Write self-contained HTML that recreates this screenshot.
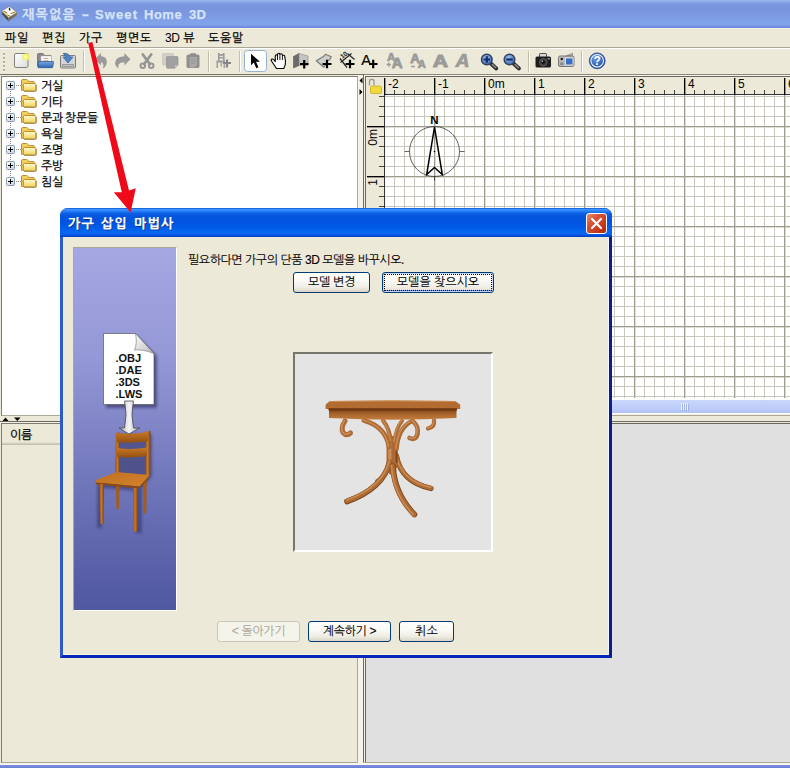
<!DOCTYPE html>
<html lang="ko">
<head>
<meta charset="utf-8">
<title>Sweet Home 3D</title>
<style>
html,body{margin:0;padding:0;}
body{-webkit-text-stroke:0.25px currentColor;width:790px;height:768px;overflow:hidden;position:relative;background:#ece9d8;font-family:"Liberation Sans","NanumGothic",sans-serif;font-size:12px;color:#000;}
.abs{position:absolute;}
div,span{box-sizing:border-box;}
svg{position:absolute;overflow:visible;}
#titlebar{left:0;top:0;width:790px;height:28px;background:linear-gradient(#a0baf1 0,#8ba6e8 2px,#7b97e1 4px,#7995de 10px,#7c9ae2 16px,#80a3e8 22px,#7fa2e8 25px,#7089e0 27px,#6f86e0 28px);}
#title{left:22px;top:7px;font-size:13px;font-weight:bold;color:#d6e2f8;white-space:nowrap;}
#menubar{left:0;top:28px;width:790px;height:20px;background:#ece9d8;border-top:1px solid #f6f3e0;border-bottom:1px solid #aca899;}
.mi{position:absolute;top:2px;font-size:12px;white-space:nowrap;letter-spacing:0.7px;}
#toolbar{left:0;top:48px;width:790px;height:26px;background:#ece9d8;border-top:1px solid #fff;}
#tree{left:1px;top:76px;width:357px;height:340px;background:#fff;border:1px solid #7f7d70;border-right-color:#aca899;border-bottom-color:#aca899;}
.tn{position:absolute;left:39px;font-size:12px;line-height:14px;white-space:nowrap;letter-spacing:-0.3px;word-spacing:-1px;}
#furn{left:1px;top:423px;width:357px;height:340px;background:#ece9d8;border:1px solid #7f7d70;border-right-color:#aca899;border-bottom-color:#aca899;}
#furnhead{left:0;top:0;width:355px;height:21px;border-bottom:1px solid #c5c1b0;box-shadow:inset 0 -1px 0 #d3cfbe,inset 0 -2px 0 #e2dfcf;font-size:12px;letter-spacing:-0.3px;}
#plan{left:366px;top:77px;width:424px;height:323px;background:#fff;overflow:hidden;}
#view3d{left:366px;top:424px;width:424px;height:338px;background:#e0e0e0;}
#dialog{left:60px;top:208px;width:552px;height:450px;background:#ece9d8;border:3px solid #0a1e8c;border-left-color:#2a5cc4;border-bottom-color:#0828bc;border-top:0;border-radius:8px 8px 0 0;box-shadow:inset 1px 0 0 #dcecfc,inset -1px 0 0 #f6faff,inset 0 -1px 0 #fbf5dc;}
#dtitle{left:-3px;top:0;width:552px;height:29px;border-radius:8px 8px 0 0;background:linear-gradient(#0a52dc 0,#3c92ff 1.5px,#2a82fa 3px,#0e62e8 5px,#0556dd 8px,#0054e0 14px,#025ce8 20px,#0468f2 24px,#0462ee 26px,#0248d0 28px,#0140c4 29px);}
#dtext{left:8px;top:8px;color:#fff;font-weight:bold;font-size:13px;letter-spacing:1.3px;word-spacing:1px;white-space:nowrap;text-shadow:1px 1px 0 #0a2a80;}
#msg,.btn{-webkit-text-stroke:0.1px currentColor;}
.btn{position:absolute;height:21px;border:1px solid #003c74;border-radius:3px;background:linear-gradient(#fff 0,#fbfaf6 40%,#efede4 75%,#d9d4c6 100%);font-size:12px;letter-spacing:-0.3px;text-align:center;line-height:19px;white-space:nowrap;}
.btn.dis{border-color:#c9c7ba;color:#aca899;background:#f5f4ea;}
</style>
</head>
<body>
<!-- title bar -->
<div id="titlebar" class="abs"><div id="title" class="abs"><span class="abs" style="left:0;letter-spacing:1.3px">재목없음</span><span class="abs" style="left:60px;transform:scaleX(1.6);transform-origin:0 0">-</span><span class="abs" style="left:73px;letter-spacing:1.1px">Sweet</span><span class="abs" style="left:122px;letter-spacing:0.5px">Home</span><span class="abs" style="left:167px;letter-spacing:0.3px">3D</span></div></div>
<!-- menu -->
<div id="menubar" class="abs">
<span class="mi" style="left:5px">파일</span><span class="mi" style="left:42px">편집</span><span class="mi" style="left:79px">가구</span><span class="mi" style="left:116px">평면도</span><span class="mi" style="left:165px;word-spacing:-0.5px"><span style="letter-spacing:-0.3px;-webkit-text-stroke:0">3D</span> 뷰</span><span class="mi" style="left:208px">도움말</span>
</div>
<div id="toolbar" class="abs"></div>
<svg class="abs" style="left:0;top:48px" width="790" height="27" viewBox="0 48 790 27">
<defs><linearGradient id="gnew" x1="0" y1="0" x2="1" y2="1"><stop offset="0" stop-color="#fff"/><stop offset="1" stop-color="#dcdcdc"/></linearGradient><linearGradient id="gblue" x1="0" y1="0" x2="0" y2="1"><stop offset="0" stop-color="#7aa6de"/><stop offset="1" stop-color="#2f62b0"/></linearGradient><radialGradient id="ghelp" cx="0.400" cy="0.300" r="0.800"><stop offset="0" stop-color="#6f9ee6"/><stop offset="1" stop-color="#173f94"/></radialGradient><radialGradient id="glens" cx="0.400" cy="0.350" r="0.700"><stop offset="0" stop-color="#a4c4ee"/><stop offset="1" stop-color="#3566b6"/></radialGradient></defs>
<rect x="0" y="74" width="363" height="1" fill="#77756a"/>
<rect x="3" y="53" width="2" height="2" fill="#b5b2a0"/><rect x="4" y="55" width="1" height="1" fill="#fff"/>
<rect x="3" y="57" width="2" height="2" fill="#b5b2a0"/><rect x="4" y="59" width="1" height="1" fill="#fff"/>
<rect x="3" y="61" width="2" height="2" fill="#b5b2a0"/><rect x="4" y="63" width="1" height="1" fill="#fff"/>
<rect x="3" y="65" width="2" height="2" fill="#b5b2a0"/><rect x="4" y="67" width="1" height="1" fill="#fff"/>
<rect x="3" y="69" width="2" height="2" fill="#b5b2a0"/><rect x="4" y="71" width="1" height="1" fill="#fff"/>
<rect x="14.500" y="53.500" width="13.500" height="14" rx="1.500" fill="url(#gnew)" stroke="#808080"/>
<circle cx="25.800" cy="57" r="3.600" fill="#f4f060" opacity="0.950"/><circle cx="25.800" cy="57" r="1.800" fill="#fcfcb0"/>
<path d="M37.500 54.500q0-1 1-1h4.500l1.500 2h6q1 0 1 1v9.500h-14z" fill="#8a8a8a" stroke="#6a6a6a" stroke-width="0.800"/>
<rect x="41" y="56" width="10.500" height="7" fill="#f8f8f8" stroke="#bbb" stroke-width="0.500"/><rect x="43.500" y="58" width="5" height="0.800" fill="#d08878"/><rect x="43.500" y="60" width="5" height="0.800" fill="#d0a898"/>
<path d="M38.500 61.500h14.500q0.600 0 0.500 0.600l-0.800 5q-0.100 0.600-0.700 0.600h-13.500q-0.600 0-0.600-0.600z" fill="url(#gblue)" stroke="#2a58a0" stroke-width="0.800"/>
<rect x="60.500" y="55.500" width="15" height="12.500" rx="1" fill="#d4d4d4" stroke="#7c7c7c"/>
<rect x="62" y="64" width="12" height="3" fill="#9a9a9a"/><rect x="63" y="65" width="10" height="1" fill="#c4c4c4"/>
<path d="M63 53.500q5.500-1 7 3.500h3l-5 6l-5-6h3q-0.500-2.500-3-3.500z" fill="#4a86c8" stroke="#2a5a98" stroke-width="0.700" stroke-linejoin="round"/>
<rect x="83" y="51" width="1" height="21" fill="#c2bfae"/><rect x="84" y="51" width="1" height="21" fill="#fff"/>
<rect x="208" y="51" width="1" height="21" fill="#c2bfae"/><rect x="209" y="51" width="1" height="21" fill="#fff"/>
<rect x="239" y="51" width="1" height="21" fill="#c2bfae"/><rect x="240" y="51" width="1" height="21" fill="#fff"/>
<rect x="528" y="51" width="1" height="21" fill="#c2bfae"/><rect x="529" y="51" width="1" height="21" fill="#fff"/>
<rect x="581" y="51" width="1" height="21" fill="#c2bfae"/><rect x="582" y="51" width="1" height="21" fill="#fff"/>
<path d="M94.800 59.200L101 53v3.300Q107.200 56.800 106.800 62.500Q106.400 66.500 102.800 68.600Q104 66.300 103.200 64.300Q102.600 62.400 101 62.300V65.500Z" fill="#9a9a9a"/>
<path d="M130.500 59.200L124.300 53v3.300Q115 56.800 115 63.500Q115.300 66.800 118.500 68.600Q117.800 66.300 118.800 64.300Q120.200 62.400 124.300 62.300V65.500Z" fill="#9a9a9a"/>
<g stroke="#969696" fill="none" stroke-width="2.800" stroke-linecap="round"><path d="M142.800 54.500l7 9.500M151.200 54.500l-7 9.500"/></g><g stroke="#969696" fill="none" stroke-width="2"><ellipse cx="142.800" cy="65.800" rx="2.300" ry="2.200"/><ellipse cx="151.200" cy="65.800" rx="2.300" ry="2.200"/></g>
<rect x="162.500" y="53.500" width="11" height="11.500" rx="1" fill="#cfcfc8" stroke="#c0c0b8" stroke-width="0.600"/>
<path d="M166.500 57.500q0-1 1-1h9.500q1 0 1 1v7.500l-3 3.200h-7.500q-1 0-1-1z" fill="#a0a0a0" stroke="#939393" stroke-width="0.700"/><path d="M175 68v-3h3z" fill="#c4c4c4"/>
<rect x="186.500" y="54.500" width="13" height="13.500" rx="1.800" fill="#8e8e8e"/><rect x="190" y="53.300" width="6" height="2.500" rx="1" fill="#8e8e8e"/>
<path d="M189.500 57h7.500v8l-2.500 2.500h-5z" fill="#a8a8a8"/><path d="M191 59.500h4.500M191 61.500h4.500M191 63.500h3" stroke="#8e8e8e" stroke-width="0.700"/>
<g fill="#9c9c9c"><rect x="218" y="53" width="1.600" height="8.500"/><rect x="223" y="53" width="1.600" height="8.500"/><rect x="218" y="54" width="6" height="1.800"/><rect x="218" y="57" width="6" height="1.500"/><path d="M216.500 60.500h8.500v2h-8.500z"/><rect x="216.500" y="62" width="1.500" height="6"/><rect x="220.500" y="62" width="1.300" height="4.500"/><rect x="223.500" y="62" width="1.500" height="6"/></g>
<path d="M223 63h8M227 59.500v8" stroke="#868686" stroke-width="2.200"/>
<rect x="244.500" y="50.500" width="22" height="21" rx="3" fill="#fff" stroke="#98b0d0"/>
<path d="M251 53.800v11.400l2.800-2.600l2.500 5.600l2.200-1l-2.500-5.400h4z" fill="#000"/>
<path d="M276.500 68.500L272.500 62.500Q270.500 60 271.500 59.200Q272.800 58.500 274.200 60.200L275.300 61.500V56.200Q275.300 54.800 276.400 54.800Q277.500 54.800 277.500 56.200V54.700Q277.500 53.300 278.700 53.300Q279.900 53.300 279.900 54.700V55Q280 53.800 281.200 53.800Q282.400 53.800 282.400 55.200V56.300Q282.500 55.300 283.600 55.300Q284.800 55.300 284.800 56.800L285.500 61.500Q285.800 65 283.800 68.500Z" fill="#fff" stroke="#000" stroke-width="1.100" stroke-linejoin="round"/><path d="M277.500 56v4M279.900 55.500v4.500M282.400 56.500v3.500" stroke="#000" stroke-width="0.900"/>
<path d="M293.500 56.500l5.500-3v12l-5.500 2.500z" fill="#6c6c6c" stroke="#555" stroke-width="0.600"/><path d="M299 53.500l9 2.500v9.500h-9z" fill="#c4c4c4" stroke="#8a8a8a" stroke-width="0.600"/>
<path d="M300 64h8.500M304.200 60v8.500" stroke="#000" stroke-width="2.200"/>
<path d="M316.300 60.800L323 56.800L325.500 54.300L331.300 56.800L329.800 59.800L328 60.500L323.800 67.200Z" fill="#cdcdcd" stroke="#7c7c7c" stroke-width="1.200" stroke-linejoin="round"/>
<path d="M322.500 64h9M327 59.800v8.500" stroke="#000" stroke-width="2.200"/>
<g stroke="#2a2a2a" stroke-width="1.300" fill="none"><path d="M340.500 62.500l11-9M347.500 53.500l7 6M340 58.500l7 9"/></g>
<text transform="translate(342.500,59) rotate(-40)" font-family="Liberation Sans, sans-serif" font-size="6.500" font-weight="bold" fill="#222">10</text>
<path d="M345.500 64h9M350 59.800v8.500" stroke="#000" stroke-width="2.200"/>
<text x="361.300" y="65" font-family="Liberation Sans, sans-serif" font-size="14.800" fill="#000" stroke="#000" stroke-width="0.150">A</text>
<path d="M369 64h8.500M373.200 59.800v8.500" stroke="#000" stroke-width="2.200"/>
<g font-family="Liberation Sans, sans-serif" font-weight="bold" fill="#9a9a9a" stroke="#9a9a9a" stroke-linejoin="round"><text x="387" y="61.300" font-size="11.600" stroke-width="0.700">A</text><text x="391.800" y="68.300" font-size="15" stroke-width="0.900">A</text><text x="410.200" y="62.500" font-size="13.300" stroke-width="0.900">A</text><text x="417.800" y="68" font-size="11.200" stroke-width="0.700">A</text><text transform="translate(432.800,66.700) scale(1.220,1)" font-size="17.300" stroke-width="1.100">A</text><text transform="translate(455.500,66.800) scale(1.100,1)" font-size="17.600" font-style="italic" stroke-width="0.700">A</text></g>
<path d="M386.500 64.500h4.500M388.700 62.500v4.200M411 66.500h4" stroke="#9c9c9c" stroke-width="1.400"/>
<path d="M490.8 63.500l5.500 5" stroke="#2e2e2e" stroke-width="3.800" stroke-linecap="round"/><path d="M492.3 64.500l3.500 3.200" stroke="#9a9a9a" stroke-width="1.200" stroke-linecap="round"/>
<circle cx="486.8" cy="59.500" r="5.300" fill="url(#glens)" stroke="#33425e" stroke-width="1.500"/>
<path d="M483.6 59.500h6.400M486.8 56.300v6.400" stroke="#142c6c" stroke-width="2.200"/>
<path d="M513.5 63.500l5.500 5" stroke="#2e2e2e" stroke-width="3.800" stroke-linecap="round"/><path d="M515.0 64.500l3.500 3.200" stroke="#9a9a9a" stroke-width="1.200" stroke-linecap="round"/>
<circle cx="509.5" cy="59.500" r="5.300" fill="url(#glens)" stroke="#33425e" stroke-width="1.500"/>
<path d="M506.3 59.500h6.400" stroke="#142c6c" stroke-width="2.200"/>
<rect x="539.500" y="53.500" width="7" height="4" rx="0.800" fill="#d8d8d8" stroke="#222" stroke-width="0.800"/><rect x="535.500" y="56.500" width="15.500" height="11" rx="1.500" fill="#1e1e1e"/>
<circle cx="543.300" cy="62.300" r="3.800" fill="#3a3a3a" stroke="#6a6a6a" stroke-width="0.800"/><circle cx="543.300" cy="62.300" r="1.800" fill="#111"/><circle cx="542.300" cy="61.300" r="0.700" fill="#ccc"/><rect x="547.500" y="58" width="2.500" height="1.500" fill="#888"/>
<path d="M566 56l6.500-2.800v3z" fill="#b0b0b0" stroke="#808080" stroke-width="0.600"/><rect x="558.500" y="56" width="15.500" height="10.500" rx="1.500" fill="#b8b8b8" stroke="#6e6e6e" stroke-width="0.900"/>
<rect x="565.500" y="58" width="7.500" height="7" fill="#3a6cc4" stroke="#e8e8e8" stroke-width="0.900"/><circle cx="561.800" cy="59" r="1.800" fill="#222" stroke="#eee" stroke-width="0.600"/><rect x="560" y="62.500" width="3.500" height="2.500" fill="#8c8c8c"/>
<circle cx="597.200" cy="60.800" r="7.900" fill="url(#ghelp)" stroke="#1c3f8c" stroke-width="0.800"/><circle cx="597.200" cy="60.800" r="6.300" fill="none" stroke="#e8eefc" stroke-width="1.100"/>
<text x="597.200" y="65.200" text-anchor="middle" font-family="Liberation Sans, sans-serif" font-weight="bold" font-size="12" fill="#fff">?</text>
</svg>
<!-- tree -->
<div id="tree" class="abs">
<span class="tn" style="top:2px">거실</span>
<span class="tn" style="top:18px">기타</span>
<span class="tn" style="top:34px">문과 창문들</span>
<span class="tn" style="top:50px">욕실</span>
<span class="tn" style="top:66px">조명</span>
<span class="tn" style="top:82px">주방</span>
<span class="tn" style="top:98px">침실</span>
</div>
<svg class="abs" style="left:0;top:0" width="364" height="450" viewBox="0 0 364 450">
<defs><linearGradient id="gfold" x1="0" y1="0" x2="0" y2="1"><stop offset="0" stop-color="#fffbd0"/><stop offset="1" stop-color="#f2d25c"/></linearGradient><linearGradient id="gbox" x1="0" y1="0" x2="1" y2="1"><stop offset="0" stop-color="#fff"/><stop offset="1" stop-color="#d4d0c4"/></linearGradient></defs>
<g><path d="M1.500 11L8.500 17.500V21.500L2.300 14.500Z" fill="#4e4a40"/><path d="M8.500 17.500L17 12.500L16.600 15.300L8.500 21.500Z" fill="#7c6e50"/><path d="M1.500 11L9.500 6.300L17 12.500L8.500 17.700Z" fill="#fbfaf6" stroke="#5a5a60" stroke-width="0.500"/><path d="M9.300 7.200q1.300 1.300 1.200 3.600l-1.600-0.800q-0.300-1.600 0.400-2.800z" fill="#111"/><path d="M3.800 11.300l3 1.700M6.300 14.800l3.300 1.200M11 13.500l4-1.200" stroke="#a87a20" stroke-width="1.100" stroke-linecap="round"/><path d="M5 13.300l3 2" stroke="#e8d8a0" stroke-width="1"/></g>
<path d="M10.500 91v86" stroke="#8c8c8c" stroke-width="1" stroke-dasharray="1 1" shape-rendering="crispEdges"/>
<g transform="translate(0,76)"><path d="M16 9.500h5" stroke="#8c8c8c" stroke-width="1" stroke-dasharray="1 1" shape-rendering="crispEdges"/><rect x="6.500" y="5.500" width="8" height="8" rx="1" fill="url(#gbox)" stroke="#8498b8"/><rect x="8" y="9" width="5" height="1" fill="#000"/><rect x="10" y="7" width="1" height="5" fill="#000"/><path d="M21.500 14V5Q21.500 3.500 23 3.500H26.500Q27.500 3.500 28 4.500L28.500 5.500H33Q34.500 5.500 34.500 7V8.500H23.500V14.500H22Q21.500 14.500 21.500 14Z" fill="#f2cf60" stroke="#b48626" stroke-width="0.900"/><path d="M23.300 8.500q0-1 1-1h10.500q1 0 1 1v5.300q0 1-1 1h-10.500q-1 0-1-1z" fill="url(#gfold)" stroke="#b48626" stroke-width="0.900"/><path d="M24 15.500h11.300q1.200-0.300 1.200-1.500v-5" fill="none" stroke="#8a6414" stroke-width="0.800" opacity="0.750"/></g>
<g transform="translate(0,92)"><path d="M16 9.500h5" stroke="#8c8c8c" stroke-width="1" stroke-dasharray="1 1" shape-rendering="crispEdges"/><rect x="6.500" y="5.500" width="8" height="8" rx="1" fill="url(#gbox)" stroke="#8498b8"/><rect x="8" y="9" width="5" height="1" fill="#000"/><rect x="10" y="7" width="1" height="5" fill="#000"/><path d="M21.500 14V5Q21.500 3.500 23 3.500H26.500Q27.500 3.500 28 4.500L28.500 5.500H33Q34.500 5.500 34.500 7V8.500H23.500V14.500H22Q21.500 14.500 21.500 14Z" fill="#f2cf60" stroke="#b48626" stroke-width="0.900"/><path d="M23.300 8.500q0-1 1-1h10.500q1 0 1 1v5.300q0 1-1 1h-10.500q-1 0-1-1z" fill="url(#gfold)" stroke="#b48626" stroke-width="0.900"/><path d="M24 15.500h11.300q1.200-0.300 1.200-1.500v-5" fill="none" stroke="#8a6414" stroke-width="0.800" opacity="0.750"/></g>
<g transform="translate(0,108)"><path d="M16 9.500h5" stroke="#8c8c8c" stroke-width="1" stroke-dasharray="1 1" shape-rendering="crispEdges"/><rect x="6.500" y="5.500" width="8" height="8" rx="1" fill="url(#gbox)" stroke="#8498b8"/><rect x="8" y="9" width="5" height="1" fill="#000"/><rect x="10" y="7" width="1" height="5" fill="#000"/><path d="M21.500 14V5Q21.500 3.500 23 3.500H26.500Q27.500 3.500 28 4.500L28.500 5.500H33Q34.500 5.500 34.500 7V8.500H23.500V14.500H22Q21.500 14.500 21.500 14Z" fill="#f2cf60" stroke="#b48626" stroke-width="0.900"/><path d="M23.300 8.500q0-1 1-1h10.500q1 0 1 1v5.300q0 1-1 1h-10.500q-1 0-1-1z" fill="url(#gfold)" stroke="#b48626" stroke-width="0.900"/><path d="M24 15.500h11.300q1.200-0.300 1.200-1.500v-5" fill="none" stroke="#8a6414" stroke-width="0.800" opacity="0.750"/></g>
<g transform="translate(0,124)"><path d="M16 9.500h5" stroke="#8c8c8c" stroke-width="1" stroke-dasharray="1 1" shape-rendering="crispEdges"/><rect x="6.500" y="5.500" width="8" height="8" rx="1" fill="url(#gbox)" stroke="#8498b8"/><rect x="8" y="9" width="5" height="1" fill="#000"/><rect x="10" y="7" width="1" height="5" fill="#000"/><path d="M21.500 14V5Q21.500 3.500 23 3.500H26.500Q27.500 3.500 28 4.500L28.500 5.500H33Q34.500 5.500 34.500 7V8.500H23.500V14.500H22Q21.500 14.500 21.500 14Z" fill="#f2cf60" stroke="#b48626" stroke-width="0.900"/><path d="M23.300 8.500q0-1 1-1h10.500q1 0 1 1v5.300q0 1-1 1h-10.500q-1 0-1-1z" fill="url(#gfold)" stroke="#b48626" stroke-width="0.900"/><path d="M24 15.500h11.300q1.200-0.300 1.200-1.500v-5" fill="none" stroke="#8a6414" stroke-width="0.800" opacity="0.750"/></g>
<g transform="translate(0,140)"><path d="M16 9.500h5" stroke="#8c8c8c" stroke-width="1" stroke-dasharray="1 1" shape-rendering="crispEdges"/><rect x="6.500" y="5.500" width="8" height="8" rx="1" fill="url(#gbox)" stroke="#8498b8"/><rect x="8" y="9" width="5" height="1" fill="#000"/><rect x="10" y="7" width="1" height="5" fill="#000"/><path d="M21.500 14V5Q21.500 3.500 23 3.500H26.500Q27.500 3.500 28 4.500L28.500 5.500H33Q34.500 5.500 34.500 7V8.500H23.500V14.500H22Q21.500 14.500 21.500 14Z" fill="#f2cf60" stroke="#b48626" stroke-width="0.900"/><path d="M23.300 8.500q0-1 1-1h10.500q1 0 1 1v5.300q0 1-1 1h-10.500q-1 0-1-1z" fill="url(#gfold)" stroke="#b48626" stroke-width="0.900"/><path d="M24 15.500h11.300q1.200-0.300 1.200-1.500v-5" fill="none" stroke="#8a6414" stroke-width="0.800" opacity="0.750"/></g>
<g transform="translate(0,156)"><path d="M16 9.500h5" stroke="#8c8c8c" stroke-width="1" stroke-dasharray="1 1" shape-rendering="crispEdges"/><rect x="6.500" y="5.500" width="8" height="8" rx="1" fill="url(#gbox)" stroke="#8498b8"/><rect x="8" y="9" width="5" height="1" fill="#000"/><rect x="10" y="7" width="1" height="5" fill="#000"/><path d="M21.500 14V5Q21.500 3.500 23 3.500H26.500Q27.500 3.500 28 4.500L28.500 5.500H33Q34.500 5.500 34.500 7V8.500H23.500V14.500H22Q21.500 14.500 21.500 14Z" fill="#f2cf60" stroke="#b48626" stroke-width="0.900"/><path d="M23.300 8.500q0-1 1-1h10.500q1 0 1 1v5.300q0 1-1 1h-10.500q-1 0-1-1z" fill="url(#gfold)" stroke="#b48626" stroke-width="0.900"/><path d="M24 15.500h11.300q1.200-0.300 1.200-1.500v-5" fill="none" stroke="#8a6414" stroke-width="0.800" opacity="0.750"/></g>
<g transform="translate(0,172)"><path d="M16 9.500h5" stroke="#8c8c8c" stroke-width="1" stroke-dasharray="1 1" shape-rendering="crispEdges"/><rect x="6.500" y="5.500" width="8" height="8" rx="1" fill="url(#gbox)" stroke="#8498b8"/><rect x="8" y="9" width="5" height="1" fill="#000"/><rect x="10" y="7" width="1" height="5" fill="#000"/><path d="M21.500 14V5Q21.500 3.500 23 3.500H26.500Q27.500 3.500 28 4.500L28.500 5.500H33Q34.500 5.500 34.500 7V8.500H23.500V14.500H22Q21.500 14.500 21.500 14Z" fill="#f2cf60" stroke="#b48626" stroke-width="0.900"/><path d="M23.300 8.500q0-1 1-1h10.500q1 0 1 1v5.300q0 1-1 1h-10.500q-1 0-1-1z" fill="url(#gfold)" stroke="#b48626" stroke-width="0.900"/><path d="M24 15.500h11.300q1.200-0.300 1.200-1.500v-5" fill="none" stroke="#8a6414" stroke-width="0.800" opacity="0.750"/></g>
<rect x="0" y="421" width="358" height="1" fill="#6a685c"/><rect x="0" y="422" width="358" height="1" fill="#f4f2e8"/><path d="M2.500 421l3-3.500l3 3.500zM14 417.500h6.500l-3.200 3.500z" fill="#000"/>
</svg>
<div class="abs" style="left:358px;top:75px;width:5px;height:688px;background:#f5f3e8"></div>
<!-- furniture table -->
<div id="furn" class="abs"><div id="furnhead" class="abs"><span class="abs" style="left:8px;top:4px">이름</span></div></div>
<!-- plan -->
<div id="plan" class="abs"></div>
<svg class="abs" style="left:358px;top:74px" width="432" height="352" viewBox="358 74 432 352">
<rect x="363" y="74" width="427" height="1" fill="#8a887a"/>
<rect x="363" y="75" width="427" height="1" fill="#f4f2e8"/>
<rect x="363" y="76" width="427" height="1" fill="#6a685c"/>
<rect x="363" y="74" width="1" height="350" fill="#6a685c"/>
<rect x="364" y="75" width="1" height="349" fill="#f4f2e8"/>
<rect x="365" y="76" width="1" height="348" fill="#6a685c"/>
<rect x="366" y="77" width="424" height="18" fill="#ece9d8"/>
<rect x="366" y="77" width="18" height="321" fill="#ece9d8"/>
<g shape-rendering="crispEdges">
<rect x="394" y="95" width="1" height="303" fill="#c9c7bc"/>
<rect x="404" y="95" width="1" height="303" fill="#c9c7bc"/>
<rect x="414" y="95" width="1" height="303" fill="#c9c7bc"/>
<rect x="424" y="95" width="1" height="303" fill="#c9c7bc"/>
<rect x="444" y="95" width="1" height="303" fill="#c9c7bc"/>
<rect x="454" y="95" width="1" height="303" fill="#c9c7bc"/>
<rect x="464" y="95" width="1" height="303" fill="#c9c7bc"/>
<rect x="474" y="95" width="1" height="303" fill="#c9c7bc"/>
<rect x="494" y="95" width="1" height="303" fill="#c9c7bc"/>
<rect x="504" y="95" width="1" height="303" fill="#c9c7bc"/>
<rect x="514" y="95" width="1" height="303" fill="#c9c7bc"/>
<rect x="524" y="95" width="1" height="303" fill="#c9c7bc"/>
<rect x="544" y="95" width="1" height="303" fill="#c9c7bc"/>
<rect x="554" y="95" width="1" height="303" fill="#c9c7bc"/>
<rect x="564" y="95" width="1" height="303" fill="#c9c7bc"/>
<rect x="574" y="95" width="1" height="303" fill="#c9c7bc"/>
<rect x="594" y="95" width="1" height="303" fill="#c9c7bc"/>
<rect x="604" y="95" width="1" height="303" fill="#c9c7bc"/>
<rect x="614" y="95" width="1" height="303" fill="#c9c7bc"/>
<rect x="624" y="95" width="1" height="303" fill="#c9c7bc"/>
<rect x="644" y="95" width="1" height="303" fill="#c9c7bc"/>
<rect x="654" y="95" width="1" height="303" fill="#c9c7bc"/>
<rect x="664" y="95" width="1" height="303" fill="#c9c7bc"/>
<rect x="674" y="95" width="1" height="303" fill="#c9c7bc"/>
<rect x="694" y="95" width="1" height="303" fill="#c9c7bc"/>
<rect x="704" y="95" width="1" height="303" fill="#c9c7bc"/>
<rect x="714" y="95" width="1" height="303" fill="#c9c7bc"/>
<rect x="724" y="95" width="1" height="303" fill="#c9c7bc"/>
<rect x="744" y="95" width="1" height="303" fill="#c9c7bc"/>
<rect x="754" y="95" width="1" height="303" fill="#c9c7bc"/>
<rect x="764" y="95" width="1" height="303" fill="#c9c7bc"/>
<rect x="774" y="95" width="1" height="303" fill="#c9c7bc"/>
<rect x="385" y="96" width="405" height="1" fill="#c9c7bc"/>
<rect x="385" y="106" width="405" height="1" fill="#c9c7bc"/>
<rect x="385" y="116" width="405" height="1" fill="#c9c7bc"/>
<rect x="385" y="136" width="405" height="1" fill="#c9c7bc"/>
<rect x="385" y="146" width="405" height="1" fill="#c9c7bc"/>
<rect x="385" y="156" width="405" height="1" fill="#c9c7bc"/>
<rect x="385" y="166" width="405" height="1" fill="#c9c7bc"/>
<rect x="385" y="186" width="405" height="1" fill="#c9c7bc"/>
<rect x="385" y="196" width="405" height="1" fill="#c9c7bc"/>
<rect x="385" y="206" width="405" height="1" fill="#c9c7bc"/>
<rect x="385" y="216" width="405" height="1" fill="#c9c7bc"/>
<rect x="385" y="236" width="405" height="1" fill="#c9c7bc"/>
<rect x="385" y="246" width="405" height="1" fill="#c9c7bc"/>
<rect x="385" y="256" width="405" height="1" fill="#c9c7bc"/>
<rect x="385" y="266" width="405" height="1" fill="#c9c7bc"/>
<rect x="385" y="286" width="405" height="1" fill="#c9c7bc"/>
<rect x="385" y="296" width="405" height="1" fill="#c9c7bc"/>
<rect x="385" y="306" width="405" height="1" fill="#c9c7bc"/>
<rect x="385" y="316" width="405" height="1" fill="#c9c7bc"/>
<rect x="385" y="336" width="405" height="1" fill="#c9c7bc"/>
<rect x="385" y="346" width="405" height="1" fill="#c9c7bc"/>
<rect x="385" y="356" width="405" height="1" fill="#c9c7bc"/>
<rect x="385" y="366" width="405" height="1" fill="#c9c7bc"/>
<rect x="385" y="386" width="405" height="1" fill="#c9c7bc"/>
<rect x="385" y="396" width="405" height="1" fill="#c9c7bc"/>
<rect x="435" y="95" width="1" height="303" fill="#d8d6cc" opacity="0.8"/><rect x="485" y="95" width="1" height="303" fill="#d8d6cc" opacity="0.8"/><rect x="535" y="95" width="1" height="303" fill="#d8d6cc" opacity="0.8"/><rect x="585" y="95" width="1" height="303" fill="#d8d6cc" opacity="0.8"/><rect x="635" y="95" width="1" height="303" fill="#d8d6cc" opacity="0.8"/><rect x="685" y="95" width="1" height="303" fill="#d8d6cc" opacity="0.8"/><rect x="735" y="95" width="1" height="303" fill="#d8d6cc" opacity="0.8"/><rect x="785" y="95" width="1" height="303" fill="#d8d6cc" opacity="0.8"/><rect x="385" y="127" width="405" height="1" fill="#d8d6cc" opacity="0.8"/><rect x="385" y="177" width="405" height="1" fill="#d8d6cc" opacity="0.8"/><rect x="385" y="227" width="405" height="1" fill="#d8d6cc" opacity="0.8"/><rect x="385" y="277" width="405" height="1" fill="#d8d6cc" opacity="0.8"/><rect x="385" y="327" width="405" height="1" fill="#d8d6cc" opacity="0.8"/><rect x="385" y="377" width="405" height="1" fill="#d8d6cc" opacity="0.8"/>
<rect x="434" y="95" width="1" height="303" fill="#9e9c8e"/>
<rect x="484" y="95" width="1" height="303" fill="#9e9c8e"/>
<rect x="534" y="95" width="1" height="303" fill="#9e9c8e"/>
<rect x="584" y="95" width="1" height="303" fill="#9e9c8e"/>
<rect x="634" y="95" width="1" height="303" fill="#9e9c8e"/>
<rect x="684" y="95" width="1" height="303" fill="#9e9c8e"/>
<rect x="734" y="95" width="1" height="303" fill="#9e9c8e"/>
<rect x="784" y="95" width="1" height="303" fill="#9e9c8e"/>
<rect x="385" y="126" width="405" height="1" fill="#9e9c8e"/>
<rect x="385" y="176" width="405" height="1" fill="#9e9c8e"/>
<rect x="385" y="226" width="405" height="1" fill="#9e9c8e"/>
<rect x="385" y="276" width="405" height="1" fill="#9e9c8e"/>
<rect x="385" y="326" width="405" height="1" fill="#9e9c8e"/>
<rect x="385" y="376" width="405" height="1" fill="#9e9c8e"/>
<rect x="384" y="94" width="406" height="1" fill="#333"/>
<rect x="384" y="94" width="1" height="304" fill="#333"/>
<rect x="384" y="78" width="1" height="17" fill="#000"/><rect x="385" y="78" width="1" height="17" fill="#000" opacity="0.35"/>
<rect x="394" y="90" width="1" height="4" fill="#444"/>
<rect x="404" y="90" width="1" height="4" fill="#444"/>
<rect x="414" y="90" width="1" height="4" fill="#444"/>
<rect x="424" y="90" width="1" height="4" fill="#444"/>
<rect x="434" y="78" width="1" height="17" fill="#000"/><rect x="435" y="78" width="1" height="17" fill="#000" opacity="0.35"/>
<rect x="444" y="90" width="1" height="4" fill="#444"/>
<rect x="454" y="90" width="1" height="4" fill="#444"/>
<rect x="464" y="90" width="1" height="4" fill="#444"/>
<rect x="474" y="90" width="1" height="4" fill="#444"/>
<rect x="484" y="78" width="1" height="17" fill="#000"/><rect x="485" y="78" width="1" height="17" fill="#000" opacity="0.35"/>
<rect x="494" y="90" width="1" height="4" fill="#444"/>
<rect x="504" y="90" width="1" height="4" fill="#444"/>
<rect x="514" y="90" width="1" height="4" fill="#444"/>
<rect x="524" y="90" width="1" height="4" fill="#444"/>
<rect x="534" y="78" width="1" height="17" fill="#000"/><rect x="535" y="78" width="1" height="17" fill="#000" opacity="0.35"/>
<rect x="544" y="90" width="1" height="4" fill="#444"/>
<rect x="554" y="90" width="1" height="4" fill="#444"/>
<rect x="564" y="90" width="1" height="4" fill="#444"/>
<rect x="574" y="90" width="1" height="4" fill="#444"/>
<rect x="584" y="78" width="1" height="17" fill="#000"/><rect x="585" y="78" width="1" height="17" fill="#000" opacity="0.35"/>
<rect x="594" y="90" width="1" height="4" fill="#444"/>
<rect x="604" y="90" width="1" height="4" fill="#444"/>
<rect x="614" y="90" width="1" height="4" fill="#444"/>
<rect x="624" y="90" width="1" height="4" fill="#444"/>
<rect x="634" y="78" width="1" height="17" fill="#000"/><rect x="635" y="78" width="1" height="17" fill="#000" opacity="0.35"/>
<rect x="644" y="90" width="1" height="4" fill="#444"/>
<rect x="654" y="90" width="1" height="4" fill="#444"/>
<rect x="664" y="90" width="1" height="4" fill="#444"/>
<rect x="674" y="90" width="1" height="4" fill="#444"/>
<rect x="684" y="78" width="1" height="17" fill="#000"/><rect x="685" y="78" width="1" height="17" fill="#000" opacity="0.35"/>
<rect x="694" y="90" width="1" height="4" fill="#444"/>
<rect x="704" y="90" width="1" height="4" fill="#444"/>
<rect x="714" y="90" width="1" height="4" fill="#444"/>
<rect x="724" y="90" width="1" height="4" fill="#444"/>
<rect x="734" y="78" width="1" height="17" fill="#000"/><rect x="735" y="78" width="1" height="17" fill="#000" opacity="0.35"/>
<rect x="744" y="90" width="1" height="4" fill="#444"/>
<rect x="754" y="90" width="1" height="4" fill="#444"/>
<rect x="764" y="90" width="1" height="4" fill="#444"/>
<rect x="774" y="90" width="1" height="4" fill="#444"/>
<rect x="784" y="78" width="1" height="17" fill="#000"/><rect x="785" y="78" width="1" height="17" fill="#000" opacity="0.35"/>
<rect x="379" y="96" width="5" height="1" fill="#444"/>
<rect x="379" y="106" width="5" height="1" fill="#444"/>
<rect x="379" y="116" width="5" height="1" fill="#444"/>
<rect x="367" y="126" width="17" height="1" fill="#000"/><rect x="367" y="127" width="17" height="1" fill="#000" opacity="0.35"/>
<rect x="379" y="136" width="5" height="1" fill="#444"/>
<rect x="379" y="146" width="5" height="1" fill="#444"/>
<rect x="379" y="156" width="5" height="1" fill="#444"/>
<rect x="379" y="166" width="5" height="1" fill="#444"/>
<rect x="367" y="176" width="17" height="1" fill="#000"/><rect x="367" y="177" width="17" height="1" fill="#000" opacity="0.35"/>
<rect x="379" y="186" width="5" height="1" fill="#444"/>
<rect x="379" y="196" width="5" height="1" fill="#444"/>
<rect x="379" y="206" width="5" height="1" fill="#444"/>
<rect x="379" y="216" width="5" height="1" fill="#444"/>
<rect x="367" y="226" width="17" height="1" fill="#000"/><rect x="367" y="227" width="17" height="1" fill="#000" opacity="0.35"/>
<rect x="379" y="236" width="5" height="1" fill="#444"/>
<rect x="379" y="246" width="5" height="1" fill="#444"/>
<rect x="379" y="256" width="5" height="1" fill="#444"/>
<rect x="379" y="266" width="5" height="1" fill="#444"/>
<rect x="367" y="276" width="17" height="1" fill="#000"/><rect x="367" y="277" width="17" height="1" fill="#000" opacity="0.35"/>
<rect x="379" y="286" width="5" height="1" fill="#444"/>
<rect x="379" y="296" width="5" height="1" fill="#444"/>
<rect x="379" y="306" width="5" height="1" fill="#444"/>
<rect x="379" y="316" width="5" height="1" fill="#444"/>
<rect x="367" y="326" width="17" height="1" fill="#000"/><rect x="367" y="327" width="17" height="1" fill="#000" opacity="0.35"/>
<rect x="379" y="336" width="5" height="1" fill="#444"/>
<rect x="379" y="346" width="5" height="1" fill="#444"/>
<rect x="379" y="356" width="5" height="1" fill="#444"/>
<rect x="379" y="366" width="5" height="1" fill="#444"/>
<rect x="367" y="376" width="17" height="1" fill="#000"/><rect x="367" y="377" width="17" height="1" fill="#000" opacity="0.35"/>
<rect x="379" y="386" width="5" height="1" fill="#444"/>
<rect x="379" y="396" width="5" height="1" fill="#444"/>
</g>
<text x="388" y="88" font-family="Liberation Sans, sans-serif" font-size="12" fill="#000">-2</text>
<text x="438" y="88" font-family="Liberation Sans, sans-serif" font-size="12" fill="#000">-1</text>
<text x="488" y="88" font-family="Liberation Sans, sans-serif" font-size="12" fill="#000">0m</text>
<text x="538" y="88" font-family="Liberation Sans, sans-serif" font-size="12" fill="#000">1</text>
<text x="588" y="88" font-family="Liberation Sans, sans-serif" font-size="12" fill="#000">2</text>
<text x="638" y="88" font-family="Liberation Sans, sans-serif" font-size="12" fill="#000">3</text>
<text x="688" y="88" font-family="Liberation Sans, sans-serif" font-size="12" fill="#000">4</text>
<text x="738" y="88" font-family="Liberation Sans, sans-serif" font-size="12" fill="#000">5</text>
<text x="788" y="88" font-family="Liberation Sans, sans-serif" font-size="12" fill="#000">6</text>
<text text-anchor="end" transform="translate(377,129) rotate(-90)" font-family="Liberation Sans, sans-serif" font-size="12" fill="#000">0m</text>
<text text-anchor="end" transform="translate(377,179) rotate(-90)" font-family="Liberation Sans, sans-serif" font-size="12" fill="#000">1</text>
<text text-anchor="end" transform="translate(377,229) rotate(-90)" font-family="Liberation Sans, sans-serif" font-size="12" fill="#000">2</text>
<text text-anchor="end" transform="translate(377,279) rotate(-90)" font-family="Liberation Sans, sans-serif" font-size="12" fill="#000">3</text>
<text text-anchor="end" transform="translate(377,329) rotate(-90)" font-family="Liberation Sans, sans-serif" font-size="12" fill="#000">4</text>
<text text-anchor="end" transform="translate(377,379) rotate(-90)" font-family="Liberation Sans, sans-serif" font-size="12" fill="#000">5</text>
<path d="M369.5 85.5v-4.5q0-1.5 1.5-1.5h1.5q1.500 0 1.500 1.500v4.500" fill="none" stroke="#9a9a9a" stroke-width="1.400"/>
<rect x="370.500" y="86" width="11" height="7.500" rx="1.500" fill="#f0d838" stroke="#c8b020" stroke-width="0.800"/>
<g fill="none" stroke="#222" stroke-width="0.700"><circle cx="434.500" cy="151.500" r="25"/><path d="M404.500 151.500h5M459.500 151.500h5M434.500 176.500v4"/></g>
<path d="M434.500 127L426.700 174.600L434.500 167.500L442.300 174.600Z" fill="none" stroke="#000" stroke-width="1.500" stroke-linejoin="miter"/>
<circle cx="434.500" cy="151.500" r="0.800" fill="#000"/>
<text x="434.500" y="123.800" text-anchor="middle" font-family="Liberation Sans, sans-serif" font-weight="bold" font-size="11.500" fill="#000">N</text>
<rect x="366" y="398" width="424" height="2" fill="#fefefb"/>
<defs><linearGradient id="sb" x1="0" y1="0" x2="0" y2="1"><stop offset="0" stop-color="#c9d7fb"/><stop offset="0.700" stop-color="#bccbf8"/><stop offset="1" stop-color="#b0c2f5"/></linearGradient></defs>
<rect x="366" y="400" width="424" height="13" fill="url(#sb)"/>
<rect x="681" y="403" width="1" height="7" fill="#eef4fe"/><rect x="682" y="404" width="1" height="7" fill="#8ca0d8" opacity="0.6"/>
<rect x="683" y="403" width="1" height="7" fill="#eef4fe"/><rect x="684" y="404" width="1" height="7" fill="#8ca0d8" opacity="0.6"/>
<rect x="685" y="403" width="1" height="7" fill="#eef4fe"/><rect x="686" y="404" width="1" height="7" fill="#8ca0d8" opacity="0.6"/>
<rect x="687" y="403" width="1" height="7" fill="#eef4fe"/><rect x="688" y="404" width="1" height="7" fill="#8ca0d8" opacity="0.6"/>
<rect x="366" y="413" width="424" height="1" fill="#fff"/>
<rect x="366" y="414" width="424" height="1" fill="#f4f2e8"/>
<rect x="366" y="415" width="424" height="1" fill="#aca899"/>
<rect x="366" y="416" width="424" height="5" fill="#ece9d8"/>
<rect x="366" y="421" width="424" height="1" fill="#716f64"/>
<rect x="366" y="422" width="424" height="1" fill="#e8e6da"/>
<rect x="366" y="423" width="424" height="1" fill="#6a685c"/>
<path d="M362.500 77.500v6l-3 -3zM359.500 89v6l3 -3z" fill="#000"/>
</svg>
<div id="view3d" class="abs"></div>
<div class="abs" style="left:363px;top:424px;width:3px;height:339px;background:linear-gradient(90deg,#6a685c 0,#6a685c 1px,#f4f2e8 1px,#f4f2e8 2px,#6a685c 2px)"></div>
<div class="abs" style="left:363px;top:762px;width:427px;height:1px;background:#aca899"></div>
<div class="abs" style="left:0;top:763px;width:790px;height:2px;background:#f8f6ec"></div>
<div class="abs" style="left:0;top:765px;width:790px;height:3px;background:linear-gradient(#7d90e2,#6b7dd6)"></div>
<!-- dialog -->
<div id="dialog" class="abs">
<div id="dtitle" class="abs"><div id="dtext" class="abs">가구 삽입 마법사</div></div>
<div class="abs" style="left:523px;top:5px;width:21px;height:21px;border:1px solid #fff;border-radius:3px;background:linear-gradient(135deg,#e8907c 0,#d8583c 30%,#c8381c 70%,#b02810 100%);"></div>
<svg class="abs" style="left:523px;top:5px" width="21" height="21" viewBox="0 0 21 21"><path d="M6 6l9 9M15 6l-9 9" stroke="#fff" stroke-width="2.200" stroke-linecap="round"/></svg>
<div class="abs" style="left:10px;top:39px;width:104px;height:364px;border:1px solid;border-color:#a8a69a #fff #fff #a8a69a;background:linear-gradient(#a4a7e2 0,#9498d6 30%,#7379bd 62%,#5a61a8 88%,#50589f 100%);"></div>
<div class="abs" style="left:125px;top:45px;font-size:12px;white-space:nowrap;letter-spacing:-0.45px" id="msg">필요하다면 가구의 단품 3D 모델을 바꾸시오.</div>
<div class="btn" style="left:230px;top:64px;width:77px">모델 변경</div>
<div class="btn" style="left:319px;top:64px;width:112px;box-shadow:inset 0 0 0 1px #c6d6f6,inset 0 -1px 0 1px #7a9ee0"><span class="abs" style="left:1px;top:1px;right:1px;bottom:1px;border:1px dotted #000"></span><span style="letter-spacing:0">모델을 찾으시오</span></div>
<div class="abs" style="left:230px;top:144px;width:200px;height:200px;background:#e4e4e4;border:2px solid;border-color:#77756a #fff #fff #77756a;"></div>
<div class="btn dis" style="left:154px;top:413px;width:83px">&lt; 돌아가기</div>
<div class="btn" style="left:245px;top:413px;width:83px">계속하기 &gt;</div>
<div class="btn" style="left:336px;top:413px;width:55px;letter-spacing:0.5px">취소</div>
<svg class="abs" style="left:-63px;top:-208px" width="790" height="768" viewBox="0 0 790 768">
<defs><linearGradient id="wd" x1="0" y1="0" x2="1" y2="0"><stop offset="0" stop-color="#98500f"/><stop offset="0.400" stop-color="#c97a28"/><stop offset="1" stop-color="#7e400c"/></linearGradient><linearGradient id="wdv" x1="0" y1="0" x2="0" y2="1"><stop offset="0" stop-color="#c87828"/><stop offset="1" stop-color="#94500f"/></linearGradient><linearGradient id="seat" x1="0" y1="0" x2="1" y2="1"><stop offset="0" stop-color="#c06e22"/><stop offset="1" stop-color="#d4842c"/></linearGradient><linearGradient id="garr" x1="0" y1="0" x2="1" y2="0"><stop offset="0" stop-color="#b4b4b4"/><stop offset="0.500" stop-color="#f4f4f4"/><stop offset="1" stop-color="#a8a8a8"/></linearGradient><linearGradient id="gfoldc" x1="0" y1="0" x2="1" y2="1"><stop offset="0" stop-color="#fff"/><stop offset="1" stop-color="#b8b8c0"/></linearGradient><linearGradient id="ttop" x1="0" y1="0" x2="0" y2="1"><stop offset="0" stop-color="#c47a3c"/><stop offset="1" stop-color="#b56a2c"/></linearGradient><linearGradient id="tapr" x1="0" y1="0" x2="0" y2="1"><stop offset="0" stop-color="#824416"/><stop offset="0.450" stop-color="#a8642c"/><stop offset="1" stop-color="#c47c3e"/></linearGradient><filter id="blur1" x="-20%" y="-20%" width="140%" height="140%"><feGaussianBlur stdDeviation="1.600"/></filter></defs>
<path d="M106 337h32l19 19v52h-51z" fill="#20204a" opacity="0.550" filter="url(#blur1)"/>
<path d="M103.500 333.500h32l18.500 20v51h-50.500z" fill="#fff" stroke="#444" stroke-width="0.600"/>
<path d="M135.500 333.500q2 10-1 16.500q8-1 19.500 3.500z" fill="url(#gfoldc)" stroke="#555" stroke-width="0.500"/>
<g font-family="Liberation Sans, sans-serif" font-weight="bold" font-size="11" fill="#111"><text x="115.500" y="362">.OBJ</text><text x="115.500" y="374">.DAE</text><text x="115.500" y="386">.3DS</text><text x="115.500" y="398">.LWS</text></g>
<path d="M118 434h34v42l-10 13v44h-6v-42l-34-3v40h-5v-44l20-9z" fill="#23234f" opacity="0.450" filter="url(#blur1)"/>
<path d="M116 485h3.500l-0.500 24h-2.500z" fill="#a45c1c"/>
<path d="M143.300 480h3.500l-0.500 33.500h-2.800z" fill="#a45c1c"/>
<path d="M116 433l4-0.500v40h-4.500z" fill="url(#wd)"/>
<path d="M145.500 431.500l5-0.500l-0.300 44h-4.500z" fill="url(#wd)"/>
<path d="M117 432.500q15 3 31-1v9.500q-16 3-31 1z" fill="url(#wdv)"/>
<path d="M117 448q15 2 30-0.500v8.500q-15 2.500-30 0.800z" fill="url(#wdv)"/>
<path d="M96 480l20.500-8l33.500 3l-10.500 11.500l-43.500-4z" fill="url(#seat)"/>
<path d="M96 482.500l43.500 4l10.500-11.500v1.800l-10.500 11.800l-43.500-4.200z" fill="#8a4a14"/>
<path d="M99.500 484h4.500l-0.500 40h-3z" fill="url(#wd)"/>
<path d="M133 488h5l-0.800 43.500h-3.400z" fill="url(#wd)"/>
<path d="M124.500 401q3 14 0 27h-5.500l10 6l10.500-6h-6q-3-13 0-27z" fill="url(#garr)" stroke="#4a4a4a" stroke-width="0.800"/>
<g fill="none" stroke-linecap="round">
<path d="M389 466Q385 477 377 481" stroke="#ac6a34" stroke-width="3.8"/>
<path d="M396.500 456Q401 482 431 488.500" stroke="#7a4418" stroke-width="5.2"/>
<path d="M396.500 455.500Q401 481.500 431 488" stroke="#ac6a34" stroke-width="4.4"/><path d="M396.500 455.500Q401 481.500 431 488" stroke="#cc8e56" stroke-width="1.4" transform="translate(-0.3,-0.7)"/>
<path d="M392 436V468" stroke="#ac6a34" stroke-width="11" stroke-linecap="butt"/><path d="M392.300 466v5" stroke="#ac6a34" stroke-width="8"/>
<path d="M389.800 438V466" stroke="#cc8e56" stroke-width="3.2"/><path d="M396.600 440V462" stroke="#7a4418" stroke-width="1.8"/>
<path d="M389.500 462.500Q383 488.500 347 501.500" stroke="#7a4418" stroke-width="5.6"/>
<path d="M389.500 462Q383 488 347 501" stroke="#ac6a34" stroke-width="4.8"/><path d="M389.500 462Q383 488 347 501" stroke="#cc8e56" stroke-width="1.5" transform="translate(-0.3,-0.9)"/>
<path d="M393 466Q394.500 494 414.500 514.500" stroke="#7a4418" stroke-width="5.6"/>
<path d="M392.500 466Q394 494 414 514.500" stroke="#ac6a34" stroke-width="4.8"/><path d="M392.500 466Q394 494 414 514.500" stroke="#cc8e56" stroke-width="1.5" transform="translate(-0.9,-0.2)"/>
<path d="M389 447Q386 427 364 420.500" stroke="#ac6a34" stroke-width="4.8"/><path d="M389 447Q386 427 364 420.500" stroke="#cc8e56" stroke-width="1.5" transform="translate(-0.6,-0.4)"/>
<path d="M391 441Q389 428 383 420.500" stroke="#ac6a34" stroke-width="4.2"/><path d="M391 441Q389 428 383 420.500" stroke="#cc8e56" stroke-width="1.3" transform="translate(-0.6,-0.4)"/>
<path d="M394.500 442Q396 428 402 421" stroke="#ac6a34" stroke-width="4.0"/><path d="M394.500 442Q396 428 402 421" stroke="#cc8e56" stroke-width="1.3" transform="translate(-0.6,-0.4)"/>
<path d="M396.500 449Q398 428 412 421" stroke="#ac6a34" stroke-width="4.6"/><path d="M396.500 449Q398 428 412 421" stroke="#cc8e56" stroke-width="1.5" transform="translate(-0.6,-0.4)"/>
<path d="M412.500 421Q419 426 417.500 434Q415.500 441 409.500 438" stroke="#ac6a34" stroke-width="4.6"/><path d="M412.500 421Q419 426 417.500 434Q415.500 441 409.500 438" stroke="#cc8e56" stroke-width="1.5" transform="translate(-0.6,-0.4)"/>
<path d="M345 421Q340.500 428 343 432.500Q346.500 436.500 350.500 433" stroke="#ac6a34" stroke-width="5.0"/><path d="M345 421Q340.500 428 343 432.500Q346.500 436.500 350.500 433" stroke="#cc8e56" stroke-width="1.6" transform="translate(-0.6,-0.4)"/>
<path d="M434 420.500Q435 427 428 428.500" stroke="#ac6a34" stroke-width="4.2"/><path d="M434 420.500Q435 427 428 428.500" stroke="#cc8e56" stroke-width="1.3" transform="translate(-0.6,-0.4)"/>
</g>
<path d="M329 409.500H456.500V418Q392.500 421.500 329 418Z" fill="url(#tapr)"/>
<path d="M330 401Q392.500 399.800 455 401L460.200 404.500V409H325.600V404.500Z" fill="#b26c32"/>
<path d="M330 401Q392.500 399.800 455 401L456 402Q392.500 400.800 329 402Z" fill="#cc8c50"/>
<path d="M328.500 408.200H457V410.400H328.500Z" fill="#6a3610"/>
</svg>
</div>
<svg class="abs" style="left:0;top:0" width="790" height="768" viewBox="0 0 790 768">
<path d="M88.200 43L92.400 42L129 190.500L135.800 188.200L130.600 212.500L113.800 192.300L121.800 192.200Z" fill="#ee0a18"/>
</svg>
</body>
</html>
